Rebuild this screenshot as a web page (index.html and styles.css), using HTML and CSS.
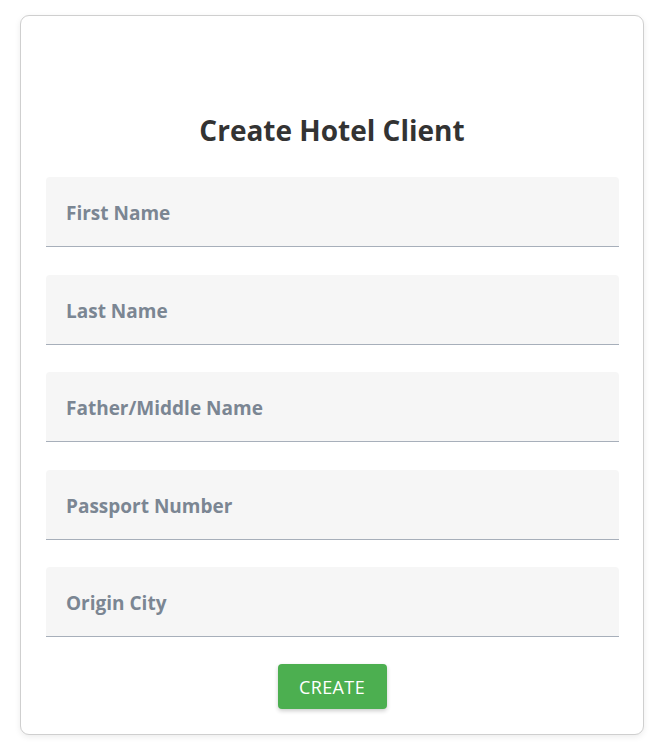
FILE: index.html
```html
<!DOCTYPE html>
<html lang="en">
<head>
<meta charset="utf-8">
<title>Create Hotel Client</title>
<link rel="stylesheet" href="styles.css">
</head>
<body>
<div class="page">
  <form class="card">
    <h1 class="title">Create Hotel Client</h1>
    <div class="fields">
      <input class="field" type="text" placeholder="First Name">
      <input class="field" type="text" placeholder="Last Name">
      <input class="field" type="text" placeholder="Father/Middle Name">
      <input class="field" type="text" placeholder="Passport Number">
      <input class="field" type="text" placeholder="Origin City">
    </div>
    <div class="actions">
      <button class="btn" type="button">CREATE</button>
    </div>
  </form>
</div>
</body>
</html>
```
FILE: styles.css
```css
html, body {
  margin: 0;
  padding: 0;
  background: #ffffff;
}
body {
  font-family: "Open Sans", "Noto Sans", "Liberation Sans", sans-serif;
}
.page {
  padding: 15px 13px 12px 20px;
}
.card {
  box-sizing: border-box;
  width: 624px;
  height: 720px;
  border: 1px solid #cfcfcf;
  border-radius: 9px;
  background: #fff;
  box-shadow: 0 2px 6px rgba(0,0,0,0.08);
  padding: 96px 25px 24px 25px;
  display: flex;
  flex-direction: column;
}
.title {
  margin: 0 0 29px 0;
  text-align: center;
  font-size: 28px;
  line-height: 36px;
  font-weight: 700;
  color: #333333;
}
.fields {
  display: flex;
  flex-direction: column;
  gap: 27.5px;
}
.field {
  box-sizing: border-box;
  width: 573px;
  height: 70px;
  border: none;
  border-bottom: 1px solid #a7afba;
  border-radius: 4px 4px 0 0;
  background: #f6f6f6;
  padding: 3px 20px 0 20px;
  font-family: inherit;
  font-size: 19px;
  font-weight: 700;
  color: #333;
  outline: none;
}
.field::placeholder {
  color: #7b8693;
  opacity: 1;
}
.actions {
  display: flex;
  justify-content: center;
  margin-top: 27px;
}
.btn {
  width: 109px;
  height: 45px;
  border: none;
  border-radius: 4px;
  background: #4caf50;
  color: #fff;
  font-family: inherit;
  font-size: 18px;
  letter-spacing: 0.4px;
  font-weight: 400;
  box-shadow: 0 2px 4px rgba(0,0,0,0.2);
  cursor: pointer;
}
```
